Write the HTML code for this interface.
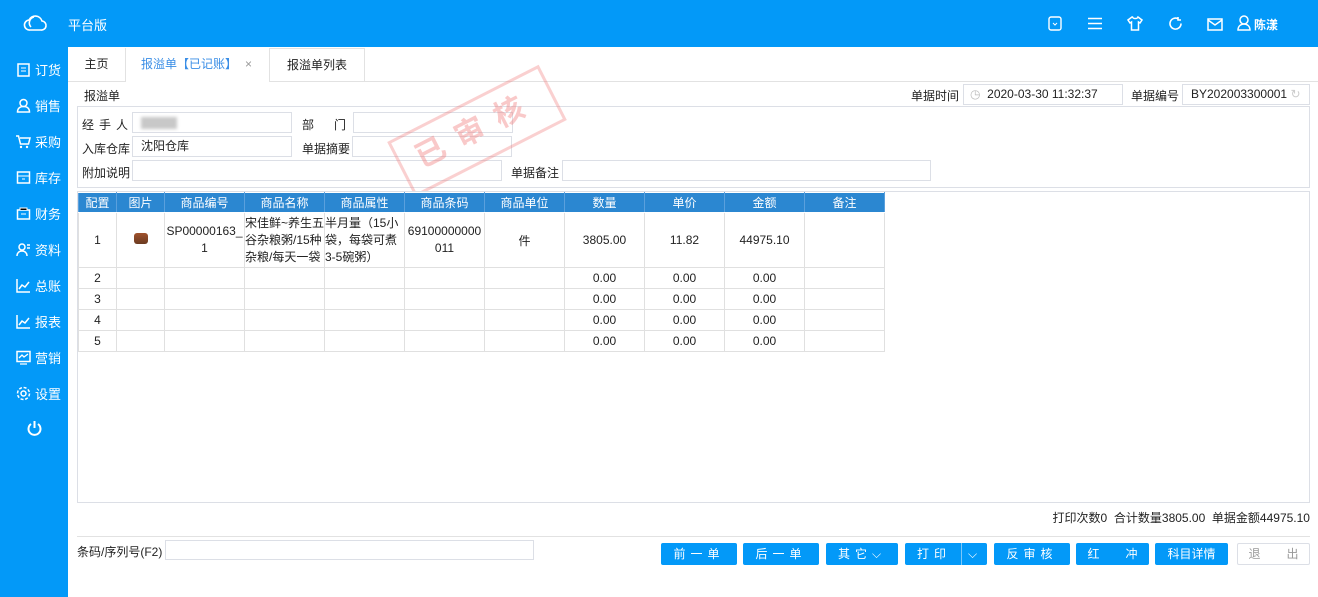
<!DOCTYPE html><html><head><meta charset="utf-8"><style>
*{box-sizing:border-box;margin:0;padding:0}
body{width:1318px;height:597px;overflow:hidden;background:#fff;font-family:"Liberation Sans","Noto Sans CJK SC",sans-serif;font-size:12px;color:#222;position:relative}
.a{position:absolute;white-space:nowrap}
.top{left:0;top:0;width:1318px;height:47px;background:#0399f8}
.side{left:0;top:47px;width:68px;height:550px;background:#0399f8}
.si{position:absolute;left:16px;color:#fff;font-size:13px;display:flex;align-items:center;gap:4px}
.si svg{width:15px;height:15px}
.tab{top:48px;height:34px;line-height:33px;text-align:center;font-size:12px;white-space:nowrap}
.inp{position:absolute;border:1px solid #dcdfe6;height:21px;background:#fff;font-size:12px;line-height:19px;padding-left:8px;white-space:nowrap}
.lbl{position:absolute;font-size:12px;white-space:nowrap}
table{border-collapse:collapse;position:absolute;left:78px;top:192px;font-size:12px}
td,th{border:1px solid #e0e0e0;text-align:center;padding:0}
th{background:#2b87d1;color:#fff;font-weight:normal;height:20px;border-color:#fff #5aa0dd}
td{height:21px}
.btn{position:absolute;top:543px;height:22px;background:#0399f8;color:#fff;border-radius:2px;text-align:center;line-height:22px;font-size:12px;letter-spacing:5px;white-space:nowrap}
</style></head><body>
<div class="a top"></div>
<svg class="a" style="left:22px;top:12px" width="26" height="22" viewBox="0 0 26 22"><path d="M8 18a5 5 0 0 1-1-10 7 7 0 0 1 13 1 4.5 4.5 0 0 1-1 9z M12 5a6 6 0 0 0-3 10" fill="none" stroke="#fff" stroke-width="1.6"/></svg>
<div class="a" style="left:68px;top:15px;color:#fff;font-size:13px">平台版</div>
<svg class="a" style="left:1048px;top:16px" width="14" height="16" viewBox="0 0 14 16"><rect x="1" y="1" width="12" height="13" rx="2" fill="none" stroke="#fff" stroke-width="1.4"/><path d="M5 7l2 2 2-2" stroke="#fff" fill="none"/></svg>
<svg class="a" style="left:1088px;top:17px" width="14" height="13"><path d="M0 1.5h14M0 6.5h14M0 11.5h14" stroke="#fff" stroke-width="1.6"/></svg>
<svg class="a" style="left:1127px;top:16px" width="16" height="15" viewBox="0 0 16 15"><path d="M5 1L1 4l2 3 1.5-1V14h7V6l1.5 1 2-3-4-3c-.5 2-5 2-5.5 0z" fill="none" stroke="#fff" stroke-width="1.5"/></svg>
<svg class="a" style="left:1168px;top:16px" width="15" height="15" viewBox="0 0 15 15"><path d="M13 7.5A5.5 5.5 0 1 1 10.5 3M10 1v3h3" fill="none" stroke="#fff" stroke-width="1.6"/></svg>
<svg class="a" style="left:1207px;top:18px" width="16" height="13"><rect x="1" y="1" width="14" height="11" fill="none" stroke="#fff" stroke-width="1.5"/><path d="M1 2l7 5 7-5" stroke="#fff" fill="none" stroke-width="1.5"/></svg>
<svg class="a" style="left:1237px;top:15px" width="14" height="16"><circle cx="7" cy="5" r="4" fill="none" stroke="#fff" stroke-width="1.5"/><path d="M1 15c0-4 3-6 6-6s6 2 6 6z" fill="none" stroke="#fff" stroke-width="1.5"/></svg>
<div class="a" style="left:1254px;top:16px;color:#fff;font-size:12px;font-weight:bold">陈漾</div>
<div class="a side"></div>
<div class="si" style="top:60px"><svg viewBox="0 0 15 15"><rect x="2" y="2" width="11" height="12" fill="none" stroke="#fff" stroke-width="1.5"/><path d="M5 6h5M5 9h5" stroke="#fff"/></svg>订货</div>
<div class="si" style="top:96px"><svg viewBox="0 0 15 15"><circle cx="7.5" cy="5" r="3.5" fill="none" stroke="#fff" stroke-width="1.5"/><path d="M1.5 14c0-4 3-5.5 6-5.5s6 1.5 6 5.5z" fill="none" stroke="#fff" stroke-width="1.5"/></svg>销售</div>
<div class="si" style="top:132px"><svg viewBox="0 0 15 15"><path d="M0 2h2.5l2 8h8l1.5-6H4" fill="none" stroke="#fff" stroke-width="1.5"/><circle cx="5" cy="13" r="1.2" fill="#fff"/><circle cx="11" cy="13" r="1.2" fill="#fff"/></svg>采购</div>
<div class="si" style="top:168px"><svg viewBox="0 0 15 15"><rect x="1.5" y="2" width="12" height="11" fill="none" stroke="#fff" stroke-width="1.5"/><path d="M1.5 6h12M6 9h3" stroke="#fff"/></svg>库存</div>
<div class="si" style="top:204px"><svg viewBox="0 0 15 15"><rect x="1.5" y="4" width="12" height="9" fill="none" stroke="#fff" stroke-width="1.5"/><path d="M4 4V2h7v2M5 8h5" stroke="#fff"/></svg>财务</div>
<div class="si" style="top:240px"><svg viewBox="0 0 15 15"><circle cx="6" cy="5" r="3" fill="none" stroke="#fff" stroke-width="1.5"/><path d="M1 14c0-3 2-5 5-5s5 2 5 5M11 3h3M11 6h3" fill="none" stroke="#fff" stroke-width="1.5"/></svg>资料</div>
<div class="si" style="top:276px"><svg viewBox="0 0 15 15"><path d="M1 1v13h13M3 11l3-4 3 2 4-5" fill="none" stroke="#fff" stroke-width="1.5"/></svg>总账</div>
<div class="si" style="top:312px"><svg viewBox="0 0 15 15"><path d="M1 1v13h13M3 11l3-4 3 2 4-5" fill="none" stroke="#fff" stroke-width="1.5"/></svg>报表</div>
<div class="si" style="top:348px"><svg viewBox="0 0 15 15"><rect x="1" y="1.5" width="13" height="10" fill="none" stroke="#fff" stroke-width="1.5"/><path d="M3 8l3-3 2 2 4-3M4 14h7" fill="none" stroke="#fff" stroke-width="1.3"/></svg>营销</div>
<div class="si" style="top:384px"><svg viewBox="0 0 15 15"><circle cx="7.5" cy="7.5" r="2.5" fill="none" stroke="#fff" stroke-width="1.5"/><circle cx="7.5" cy="7.5" r="6" fill="none" stroke="#fff" stroke-width="1.5" stroke-dasharray="3 1.7"/></svg>设置</div>
<svg class="a" style="left:26px;top:420px" width="17" height="17" viewBox="0 0 17 17"><path d="M5 4a6 6 0 1 0 7 0M8.5 1v7" fill="none" stroke="#fff" stroke-width="2"/></svg>

<div class="a" style="left:68px;top:81px;width:1250px;height:1px;background:#e2e2e2"></div>
<div class="a tab" style="left:68px;width:58px;border-right:1px solid #e2e2e2">主页</div>
<div class="a tab" style="left:126px;width:144px;background:#fff;color:#3a8ee6;border-right:1px solid #e2e2e2;text-align:left;padding-left:15px">报溢单【已记账】<span style="color:#999;position:absolute;left:119px">×</span></div>
<div class="a tab" style="left:270px;width:95px;border-top:1px solid #e2e2e2;border-right:1px solid #e2e2e2;height:33px">报溢单列表</div>
<div class="lbl" style="left:84px;top:87px">报溢单</div>
<div class="lbl" style="left:911px;top:87px">单据时间</div>
<div class="inp" style="left:963px;top:84px;width:160px;padding-left:6px"><span style="color:#bbb">◷</span>&nbsp; 2020-03-30 11:32:37</div>
<div class="lbl" style="left:1131px;top:87px">单据编号</div>
<div class="inp" style="left:1182px;top:84px;width:128px;padding-left:8px">BY202003300001 <span style="color:#ccc">↻</span></div>
<div class="a" style="left:77px;top:106px;width:1233px;height:82px;border:1px solid #dcdfe6"></div>
<div class="lbl" style="left:82px;top:116px;letter-spacing:5px">经手人</div>
<div class="inp" style="left:132px;top:112px;width:160px"><span style="display:inline-block;width:36px;height:12px;background:#c8c8c8;filter:blur(1.5px);vertical-align:middle"></span></div>
<div class="lbl" style="left:302px;top:116px">部&nbsp;&nbsp;&nbsp;&nbsp;&nbsp;&nbsp;门</div>
<div class="inp" style="left:353px;top:112px;width:160px"></div>
<div class="lbl" style="left:82px;top:140px">入库仓库</div>
<div class="inp" style="left:132px;top:136px;width:160px">沈阳仓库</div>
<div class="lbl" style="left:302px;top:140px">单据摘要</div>
<div class="inp" style="left:352px;top:136px;width:160px"></div>
<div class="lbl" style="left:82px;top:164px">附加说明</div>
<div class="inp" style="left:132px;top:160px;width:370px"></div>
<div class="lbl" style="left:511px;top:164px">单据备注</div>
<div class="inp" style="left:562px;top:160px;width:369px"></div>
<div class="a" style="left:392px;top:100px;width:170px;height:62px;border:3px solid rgba(240,120,120,.35);transform:rotate(-27deg);color:rgba(240,120,120,.4);font-size:30px;text-align:center;line-height:54px;letter-spacing:14px;font-weight:bold">已审核</div>
<div class="a" style="left:77px;top:191px;width:1233px;height:312px;border:1px solid #dcdfe6"></div>
<table>
<tr><th style="width:38px">配置</th><th style="width:48px">图片</th><th style="width:80px">商品编号</th><th style="width:80px">商品名称</th><th style="width:80px">商品属性</th><th style="width:80px">商品条码</th><th style="width:80px">商品单位</th><th style="width:80px">数量</th><th style="width:80px">单价</th><th style="width:80px">金额</th><th style="width:80px">备注</th></tr>
<tr style="height:55px"><td>1</td><td><span style="display:inline-block;width:14px;height:11px;background:linear-gradient(#a0522d,#6b3b22);border-radius:3px"></span></td><td style="line-height:17px">SP00000163_<br>1</td><td style="text-align:left;line-height:17px">宋佳鲜~养生五谷杂粮粥/15种杂粮/每天一袋</td><td style="text-align:left;line-height:17px">半月量（15小袋，每袋可煮3-5碗粥）</td><td style="line-height:17px">69100000000<br>011</td><td>件</td><td>3805.00</td><td>11.82</td><td>44975.10</td><td></td></tr>
<tr><td>2</td><td></td><td></td><td></td><td></td><td></td><td></td><td>0.00</td><td>0.00</td><td>0.00</td><td></td></tr>
<tr><td>3</td><td></td><td></td><td></td><td></td><td></td><td></td><td>0.00</td><td>0.00</td><td>0.00</td><td></td></tr>
<tr><td>4</td><td></td><td></td><td></td><td></td><td></td><td></td><td>0.00</td><td>0.00</td><td>0.00</td><td></td></tr>
<tr><td>5</td><td></td><td></td><td></td><td></td><td></td><td></td><td>0.00</td><td>0.00</td><td>0.00</td><td></td></tr>
</table>
<div class="lbl" style="right:8px;top:509px">打印次数0&nbsp;&nbsp;合计数量3805.00&nbsp;&nbsp;单据金额44975.10</div>
<div class="a" style="left:77px;top:536px;width:1233px;height:1px;background:#e2e2e2"></div>
<div class="lbl" style="left:77px;top:543px">条码/序列号(F2)</div>
<div class="inp" style="left:165px;top:540px;width:369px;height:20px"></div>
<div class="btn" style="left:661px;width:76px">前一单</div>
<div class="btn" style="left:743px;width:76px">后一单</div>
<div class="btn" style="left:826px;width:72px">其它⌵</div>
<div class="btn" style="left:905px;width:82px;text-align:left;padding-left:12px">打印<span style="position:absolute;left:56px;top:0;height:22px;border-left:1px solid #7cc7f9;padding-left:6px">⌵</span></div>
<div class="btn" style="left:994px;width:76px">反审核</div>
<div class="btn" style="left:1076px;width:73px;letter-spacing:0"><span>红</span><span style="margin-left:26px">冲</span></div>
<div class="btn" style="left:1155px;width:73px;letter-spacing:0">科目详情</div>
<div class="btn" style="left:1237px;width:73px;background:#fff;border:1px solid #dcdfe6;color:#999;letter-spacing:0;line-height:20px"><span>退</span><span style="margin-left:26px">出</span></div>
</body></html>
